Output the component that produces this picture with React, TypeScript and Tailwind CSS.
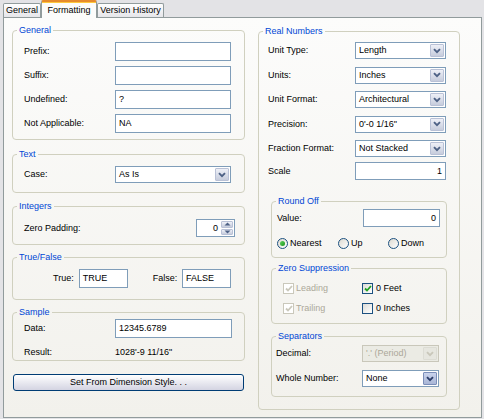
import React from "react";

function Chevron({ color = "#4d6185" }: { color?: string }) {
  return (
    <svg width="8" height="6" viewBox="0 0 8 6">
      <path d="M1 1.2 L4 4.2 L7 1.2" fill="none" stroke={color} strokeWidth="1.9" />
    </svg>
  );
}

function Group({
  title,
  className = "",
  inner = "",
  children,
}: {
  title: string;
  className?: string;
  inner?: string;
  children: React.ReactNode;
}) {
  return (
    <fieldset className={`border border-[#d0d0bf] rounded-[4px] ${className}`}>
      <legend className="ml-[4px] px-[2px] leading-[12px] text-[#0046d5]">{title}</legend>
      <div className={inner}>{children}</div>
    </fieldset>
  );
}

function TextBox({
  value = "",
  className = "",
  right = false,
}: {
  value?: string;
  className?: string;
  right?: boolean;
}) {
  return (
    <div
      className={`flex items-center border border-[#7f9db9] bg-white px-[3px] whitespace-nowrap ${
        right ? "justify-end" : ""
      } ${className}`}
    >
      {value}
    </div>
  );
}

function Select({
  value,
  className = "",
  disabled = false,
  focused = false,
}: {
  value: string;
  className?: string;
  disabled?: boolean;
  focused?: boolean;
}) {
  const box = disabled
    ? "border-[#c9c7ba] bg-[#ebebe4] text-[#aca899]"
    : "border-[#7f9db9] bg-white";
  const btn = disabled
    ? "border-[#dcdcd4] bg-[#e6e6df]"
    : focused
    ? "border-[#7b8eb8] bg-gradient-to-b from-[#c9d3ec] to-[#a9b6d6]"
    : "border-[#b9c1d6] bg-gradient-to-b from-[#eef0f7] to-[#c6ccdc]";
  return (
    <div className={`flex h-[17px] border ${box} ${className}`}>
      <div className="flex flex-1 items-center overflow-hidden whitespace-nowrap pl-[3px]">{value}</div>
      <div className={`m-px flex w-[14px] items-center justify-center rounded-[1px] border ${btn}`}>
        <Chevron color={disabled ? "#c9c7ba" : focused ? "#2c3e6a" : "#4d6185"} />
      </div>
    </div>
  );
}

function Spinner() {
  return (
    <div className="flex h-[18px] w-[39px] border border-[#7f9db9] bg-white">
      <div className="flex flex-1 items-center justify-end pr-[3px]">0</div>
      <div className="flex w-[13px] flex-col gap-px py-px pr-px">
        <div className="flex flex-1 items-center justify-center rounded-[1px] border border-[#b9c1d6] bg-gradient-to-b from-[#eef0f7] to-[#c6ccdc]">
          <svg width="7" height="4" viewBox="0 0 7 4">
            <path d="M0.5 3.5 L3.5 0.5 L6.5 3.5 Z" fill="#4d6185" />
          </svg>
        </div>
        <div className="flex flex-1 items-center justify-center rounded-[1px] border border-[#b9c1d6] bg-gradient-to-b from-[#eef0f7] to-[#c6ccdc]">
          <svg width="7" height="4" viewBox="0 0 7 4">
            <path d="M0.5 0.5 L3.5 3.5 L6.5 0.5 Z" fill="#4d6185" />
          </svg>
        </div>
      </div>
    </div>
  );
}

function Radio({ checked = false }: { checked?: boolean }) {
  return (
    <div className="flex h-[11px] w-[11px] items-center justify-center rounded-full border border-[#1c5180] bg-gradient-to-br from-[#dcd9d0] to-white">
      {checked && <div className="h-[5px] w-[5px] rounded-full bg-gradient-to-br from-[#5fd35f] to-[#169516]" />}
    </div>
  );
}

function Check({ checked = false, disabled = false }: { checked?: boolean; disabled?: boolean }) {
  return (
    <div
      className={`flex h-[11px] w-[11px] items-center justify-center border ${
        disabled ? "border-[#cac8bb] bg-white" : "border-[#1c5180] bg-gradient-to-br from-[#dcdcd7] to-white"
      }`}
    >
      {checked && (
        <svg width="8" height="7" viewBox="0 0 8 7">
          <path d="M1 3.5 L3 5.5 L7 1" fill="none" stroke={disabled ? "#cac8bb" : "#21a121"} strokeWidth="1.8" />
        </svg>
      )}
    </div>
  );
}

export default function App() {
  return (
    <div className="h-[419px] w-[484px] overflow-hidden bg-[#e3e3e6] font-['Liberation_Sans',Arial,sans-serif] text-[9px] leading-[11px] text-black">
      {/* Tabs */}
      <div className="relative z-10 flex h-[17px] items-end pl-[3px]">
        <div className="flex h-[14px] w-[38px] items-center justify-center rounded-t-[2px] border border-b-0 border-[#919b9c] bg-gradient-to-b from-white to-[#e6e6ea]">
          General
        </div>
        <div className="-mb-px flex h-[18px] w-[56px] items-center justify-center rounded-t-[2px] border-x border-t-2 border-x-[#919b9c] border-t-[#e68b2c] bg-[#fcfcfb] shadow-[inset_0_1px_0_#ffc83c]">
          Formatting
        </div>
        <div className="flex h-[14px] w-[67px] items-center justify-center rounded-t-[2px] border border-b-0 border-[#919b9c] bg-gradient-to-b from-white to-[#e6e6ea]">
          Version History
        </div>
      </div>

      {/* Panel */}
      <div className="ml-[3px] flex h-[401px] w-[479px] gap-[13px] border border-[#919b9c] bg-gradient-to-b from-[#fcfcfb] to-[#f2f1ec] pl-[8px]">
        {/* Left column */}
        <div className="flex w-[233px] flex-col">
          <Group title="General" className="mt-[6px]" inner="pb-[6px] pl-[11px] pr-[13px] pt-[6px]">
            <div className="flex flex-col gap-[5px]">
              <div className="flex items-center justify-between">
                <span>Prefix:</span>
                <TextBox className="h-[19px] w-[116px]" />
              </div>
              <div className="flex items-center justify-between">
                <span>Suffix:</span>
                <TextBox className="h-[19px] w-[116px]" />
              </div>
              <div className="flex items-center justify-between">
                <span>Undefined:</span>
                <TextBox value="?" className="h-[19px] w-[116px]" />
              </div>
              <div className="flex items-center justify-between">
                <span>Not Applicable:</span>
                <TextBox value="NA" className="h-[19px] w-[116px]" />
              </div>
            </div>
          </Group>

          <Group title="Text" className="mt-[8px]" inner="pb-[9px] pl-[11px] pr-[13px] pt-[6px]">
            <div className="flex items-center justify-between">
              <span>Case:</span>
              <Select value="As Is" className="w-[116px]" />
            </div>
          </Group>

          <Group title="Integers" className="mt-[7px]" inner="pb-[7px] pl-[11px] pr-[9px] pt-[7px]">
            <div className="flex items-center justify-between">
              <span>Zero Padding:</span>
              <Spinner />
            </div>
          </Group>

          <Group title="True/False" className="mt-[6px]" inner="pb-[11px] pl-[11px] pr-[13px] pt-[6px]">
            <div className="flex items-center">
              <span className="ml-[29px]">True:</span>
              <TextBox value="TRUE" className="ml-[5px] h-[19px] w-[49px]" />
              <span className="ml-[25px]">False:</span>
              <TextBox value="FALSE" className="ml-auto h-[19px] w-[49px]" />
            </div>
          </Group>

          <Group title="Sample" className="mt-[6px]" inner="pb-[2px] pl-[11px] pr-[12px] pt-[1px]">
            <div className="flex items-center justify-between">
              <span>Data:</span>
              <TextBox value="12345.6789" className="h-[19px] w-[117px]" />
            </div>
            <div className="mt-[8px] flex h-[12px] items-center justify-between">
              <span>Result:</span>
              <span className="w-[117px]">{"1028'-9 11/16\""}</span>
            </div>
          </Group>

          <button className="mt-[13px] ml-[1px] flex h-[17px] w-[231px] items-center justify-center rounded-[3px] border border-[#003c74] bg-gradient-to-b from-white to-[#d4d4e2] text-[9px]">
            Set From Dimension Style. . .
          </button>
        </div>

        {/* Right column */}
        <div className="flex w-[202px] flex-col">
          <Group title="Real Numbers" className="mt-[7px]" inner="pb-[12px] pl-[12px] pr-[12px] pt-[5px]">
            <div className="-ml-[3px] mr-px flex flex-col gap-[7.5px]">
              <div className="flex items-center justify-between">
                <span>Unit Type:</span>
                <Select value="Length" className="w-[91px]" />
              </div>
              <div className="flex items-center justify-between">
                <span>Units:</span>
                <Select value="Inches" className="w-[91px]" />
              </div>
              <div className="flex items-center justify-between">
                <span>Unit Format:</span>
                <Select value="Architectural" className="w-[91px]" />
              </div>
              <div className="flex items-center justify-between">
                <span>Precision:</span>
                <Select value={"0'-0 1/16\""} className="w-[91px]" />
              </div>
              <div className="flex items-center justify-between">
                <span>Fraction Format:</span>
                <Select value="Not Stacked" className="w-[91px]" />
              </div>
            </div>
            <div className="-ml-[3px] mr-px mt-[5px] flex items-center justify-between">
              <span>Scale</span>
              <TextBox value="1" right className="h-[18px] w-[91px]" />
            </div>

            <Group title="Round Off" className="mt-[15px]" inner="pb-[8px] pl-[5px] pr-[6px] pt-[2px]">
              <div className="flex items-center justify-between">
                <span>Value:</span>
                <TextBox value="0" right className="h-[18px] w-[77px]" />
              </div>
              <div className="mt-[10px] flex h-[12px] items-center">
                <div className="flex w-[61px] items-center gap-[2px]">
                  <Radio checked />
                  <span>Nearest</span>
                </div>
                <div className="flex w-[50px] items-center gap-[2px]">
                  <Radio />
                  <span>Up</span>
                </div>
                <div className="flex items-center gap-[2px]">
                  <Radio />
                  <span>Down</span>
                </div>
              </div>
            </Group>

            <Group title="Zero Suppression" className="mt-[4px]" inner="pb-[9px] pl-[11px] pr-[6px] pt-[8px]">
              <div className="flex h-[12px] items-center">
                <div className="flex w-[79px] items-center gap-[2px] text-[#aca899]">
                  <Check checked disabled />
                  <span>Leading</span>
                </div>
                <div className="flex items-center gap-[3px]">
                  <Check checked />
                  <span>0 Feet</span>
                </div>
              </div>
              <div className="mt-[8px] flex h-[12px] items-center">
                <div className="flex w-[79px] items-center gap-[2px] text-[#aca899]">
                  <Check checked disabled />
                  <span>Trailing</span>
                </div>
                <div className="flex items-center gap-[3px]">
                  <Check />
                  <span>0 Inches</span>
                </div>
              </div>
            </Group>

            <Group title="Separators" className="mt-[6px]" inner="pb-[9px] pl-[4px] pr-[7px] pt-[3px]">
              <div className="flex items-center justify-between">
                <span>Decimal:</span>
                <Select value={"'.' (Period)"} disabled className="w-[77px]" />
              </div>
              <div className="mt-[8px] flex items-center justify-between">
                <span>Whole Number:</span>
                <Select value="None" focused className="w-[77px]" />
              </div>
            </Group>
          </Group>
        </div>
      </div>
    </div>
  );
}
